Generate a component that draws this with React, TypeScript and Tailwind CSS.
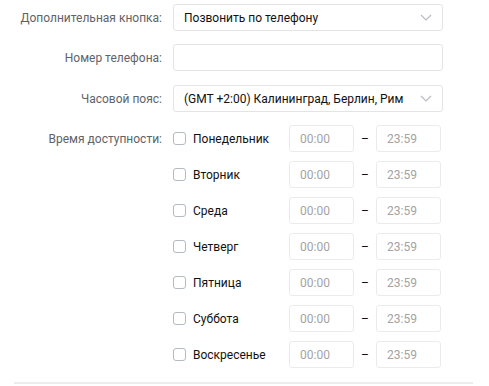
const DAYS = ["Понедельник", "Вторник", "Среда", "Четверг", "Пятница", "Суббота", "Воскресенье"];

function Chevron() {
  return (
    <svg width="12" height="7" viewBox="0 0 12 7" fill="none" className="shrink-0">
      <path d="M1 1l5 5 5-5" stroke="#b8bcc2" strokeWidth="1.2" />
    </svg>
  );
}

function Label({ children }: { children: string }) {
  return (
    <div className="w-[162px] shrink-0 text-right text-[12px] text-[#5f6368]">{children}</div>
  );
}

export default function App() {
  return (
    <div
      className="w-[489px] h-[386px] bg-white pt-[4px]"
      style={{ fontFamily: "Roboto, 'Liberation Sans', sans-serif" }}
    >
      <div className="flex items-center h-[27px]">
        <Label>Дополнительная кнопка:</Label>
        <div className="ml-[11px] w-[270px] h-[27px] border border-[#e3e4e6] rounded-[3px] flex items-center justify-between pl-[10px] pr-[10px] text-[12px] text-[#111]">
          <span>Позвонить по телефону</span>
          <Chevron />
        </div>
      </div>
      <div className="flex items-center h-[27px] mt-[13px]">
        <Label>Номер телефона:</Label>
        <div className="ml-[11px] w-[270px] h-[27px] border border-[#e3e4e6] rounded-[3px]" />
      </div>
      <div className="flex items-center h-[27px] mt-[14px]">
        <Label>Часовой пояс:</Label>
        <div className="ml-[11px] w-[270px] h-[27px] border border-[#e3e4e6] rounded-[3px] flex items-center justify-between pl-[10px] pr-[10px] text-[12px] text-[#111]">
          <span>(GMT +2:00) Калининград, Берлин, Рим</span>
          <Chevron />
        </div>
      </div>
      <div className="flex mt-[13px]">
        <div className="h-[27px] flex items-center">
          <Label>Время доступности:</Label>
        </div>
        <div className="ml-[11px] flex flex-col gap-[9px]">
          {DAYS.map((d) => (
            <div key={d} className="flex items-center h-[27px]">
              <div className="w-[13px] h-[13px] border border-[#b4bac2] rounded-[3px] shrink-0" />
              <span className="ml-[7px] w-[96px] text-[12px] text-[#111]">{d}</span>
              <div className="w-[65px] h-[27px] border border-[#ebebeb] rounded-[3px] flex items-center pl-[10px] text-[12px] text-[#a3a3a3]">
                00:00
              </div>
              <div className="w-[22px] flex justify-center text-[12px] text-[#111]">–</div>
              <div className="w-[65px] h-[27px] border border-[#ebebeb] rounded-[3px] flex items-center pl-[10px] text-[12px] text-[#a3a3a3]">
                23:59
              </div>
            </div>
          ))}
        </div>
      </div>
      <div className="mt-[14px] ml-[14px] w-[459px] h-[2px] bg-[#ececec]" />
    </div>
  );
}
